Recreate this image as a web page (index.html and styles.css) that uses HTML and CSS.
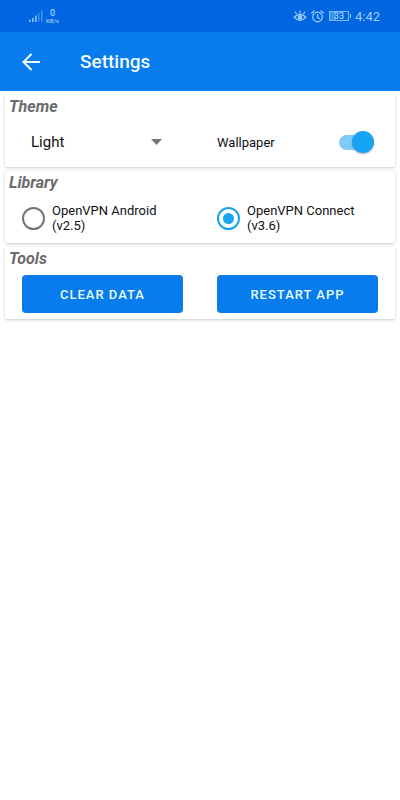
FILE: index.html
```html
<!DOCTYPE html>
<html lang="en">
<head>
<meta charset="utf-8">
<meta name="viewport" content="width=device-width, initial-scale=1">
<title>Settings</title>
<link rel="stylesheet" href="styles.css">
</head>
<body>
<div class="status">
  <svg class="signal" width="14" height="12" viewBox="0 0 14 12" aria-hidden="true">
    <path class="on" d="M0 9.5h1.6V12H0zM3 8h1.6v4H3zM6 5.5h1.6V12H6z"/>
    <path class="off" d="M9 3h1.6v9H9zM12 0h1.6v12H12z"/>
  </svg>
  <div class="speed"><span class="rate">0</span><span class="unit">KB/s</span></div>
  <div class="indicators">
    <svg width="14" height="12" viewBox="0 0 14 12" fill="none" stroke="currentColor" stroke-width="1.2" stroke-linecap="round" aria-hidden="true">
      <path d="M1 7.2Q7 1.6 13 7.2Q7 13.6 1 7.2zM7 3V.9M3.4 3.6L2.2 2M10.6 3.6L11.8 2"/>
      <circle cx="7" cy="7.4" r="1.7" fill="currentColor"/>
    </svg>
    <svg width="13" height="13" viewBox="0 0 13 13" fill="none" stroke="currentColor" stroke-width="1.2" stroke-linecap="round" aria-hidden="true">
      <circle cx="6.5" cy="7" r="4.8"/>
      <path d="M6.5 4.3V7l1.9 1.7M.8 3L3 1M12.2 3L10 1"/>
    </svg>
    <div class="battery"><span class="level">33</span></div>
    <span class="clock">4:42</span>
  </div>
</div>
<header class="appbar">
  <button class="back" type="button" aria-label="Back">
    <svg width="18" height="18" viewBox="0 0 18 18" fill="none" stroke="currentColor" stroke-width="2" aria-hidden="true">
      <path d="M18 9H2M9.5 1L1.5 9l8 8"/>
    </svg>
  </button>
  <h1 class="title">Settings</h1>
</header>
<main class="content">
  <section class="card">
    <h2 class="heading">Theme</h2>
    <div class="row">
      <div class="picker">
        <select class="select" aria-label="Theme"><option>Light</option></select>
        <svg class="caret" width="11" height="6" viewBox="0 0 11 6" aria-hidden="true"><path d="M0 0h11L5.5 6z"/></svg>
      </div>
      <label class="toggle">Wallpaper<input class="switch" type="checkbox" role="switch" checked></label>
    </div>
  </section>
  <section class="card">
    <h2 class="heading">Library</h2>
    <div class="row">
      <label class="choice"><input class="radio" type="radio" name="library"><span>OpenVPN Android (v2.5)</span></label>
      <label class="choice"><input class="radio" type="radio" name="library" checked><span>OpenVPN Connect (v3.6)</span></label>
    </div>
  </section>
  <section class="card">
    <h2 class="heading">Tools</h2>
    <div class="row">
      <button class="action" type="button">CLEAR DATA</button>
      <button class="action" type="button">RESTART APP</button>
    </div>
  </section>
</main>
</body>
</html>
```
FILE: styles.css
```css
* {
  box-sizing: border-box;
}

body {
  margin: 0;
  background: #fff;
  color: #111;
  font-family: Roboto, "Liberation Sans", sans-serif;
  font-size: 13px;
}

.status {
  display: flex;
  align-items: center;
  height: 32px;
  padding: 0 20px 0 29px;
  background: #0065e0;
  color: #9fd0fb;
}

.signal .on {
  fill: #86c2fa;
}

.signal .off {
  fill: #3c8dec;
}

.speed {
  display: flex;
  flex-direction: column;
  align-items: center;
  margin-left: 3px;
}

.rate {
  font-size: 9px;
  font-weight: 500;
  line-height: 10px;
}

.unit {
  font-size: 6px;
  font-weight: 500;
  line-height: 6px;
}

.indicators {
  display: flex;
  align-items: center;
  gap: 4px;
  margin-left: auto;
}

.battery {
  position: relative;
  width: 20px;
  height: 10px;
  margin: 0 2px 0 1px;
  border: 1px solid #7ab8f7;
  background: linear-gradient(90deg, #3f90ec 33%, transparent 33%);
  font-size: 9px;
  font-weight: 500;
  line-height: 8px;
  text-align: center;
}

.battery::after {
  content: "";
  position: absolute;
  top: 2px;
  right: -3px;
  width: 1px;
  height: 4px;
  background: #9fd0fb;
}

.clock {
  font-size: 13px;
}

.appbar {
  display: flex;
  align-items: center;
  height: 59px;
  padding-left: 22px;
  background: #087cec;
  color: #f2fbff;
}

.back {
  display: flex;
  padding: 0;
  border: 0;
  background: none;
  color: inherit;
}

.title {
  margin: 0 0 0 40px;
  font-size: 19px;
  font-weight: 500;
}

.content {
  display: grid;
  gap: 4px;
  padding: 4px 5px;
}

.card {
  padding-bottom: 4px;
  border-radius: 2px;
  background: #fff;
  box-shadow: 0 1px 3px rgba(0, 0, 0, 0.22);
}

.heading {
  margin: 0;
  padding: 2px 4px 4px;
  color: #6b6b6b;
  font-size: 16px;
  font-style: italic;
  font-weight: 700;
  line-height: 20px;
}

.row {
  display: grid;
  grid-template-columns: 1fr 1fr;
  column-gap: 34px;
  align-items: center;
  min-height: 42px;
  padding: 0 17px;
}

.picker {
  display: grid;
  align-items: center;
  padding: 0 21px 0 9px;
}

.select,
.caret {
  grid-area: 1 / 1;
}

.select {
  appearance: none;
  padding: 0;
  border: 0;
  background: none;
  color: #111;
  font: inherit;
  font-size: 15px;
}

.caret {
  justify-self: end;
  fill: #757575;
  pointer-events: none;
}

.toggle {
  display: flex;
  align-items: center;
  justify-content: space-between;
  padding-right: 4px;
}

.switch {
  display: flex;
  align-items: center;
  justify-content: flex-end;
  appearance: none;
  width: 35px;
  height: 15px;
  margin: 0;
  border-radius: 8px;
  background: #7fcbf8;
}

.switch::before {
  content: "";
  width: 22px;
  height: 22px;
  flex: none;
  border-radius: 50%;
  background: #18a3f5;
  box-shadow: 0 1px 2px rgba(0, 0, 0, 0.3);
}

.choice {
  display: flex;
  align-items: center;
  gap: 7px;
  line-height: 15px;
}

.radio {
  flex: none;
  display: grid;
  place-items: center;
  appearance: none;
  width: 23px;
  height: 23px;
  margin: 0;
  border: 2px solid #757575;
  border-radius: 50%;
}

.radio:checked {
  border-color: #18a3e8;
}

.radio:checked::before {
  content: "";
  width: 11px;
  height: 11px;
  border-radius: 50%;
  background: #18a3f5;
}

.action {
  height: 38px;
  padding: 0;
  border: 0;
  border-radius: 4px;
  background: #087cec;
  color: #e8fbff;
  font: inherit;
  font-weight: 500;
  letter-spacing: 1px;
}
```
